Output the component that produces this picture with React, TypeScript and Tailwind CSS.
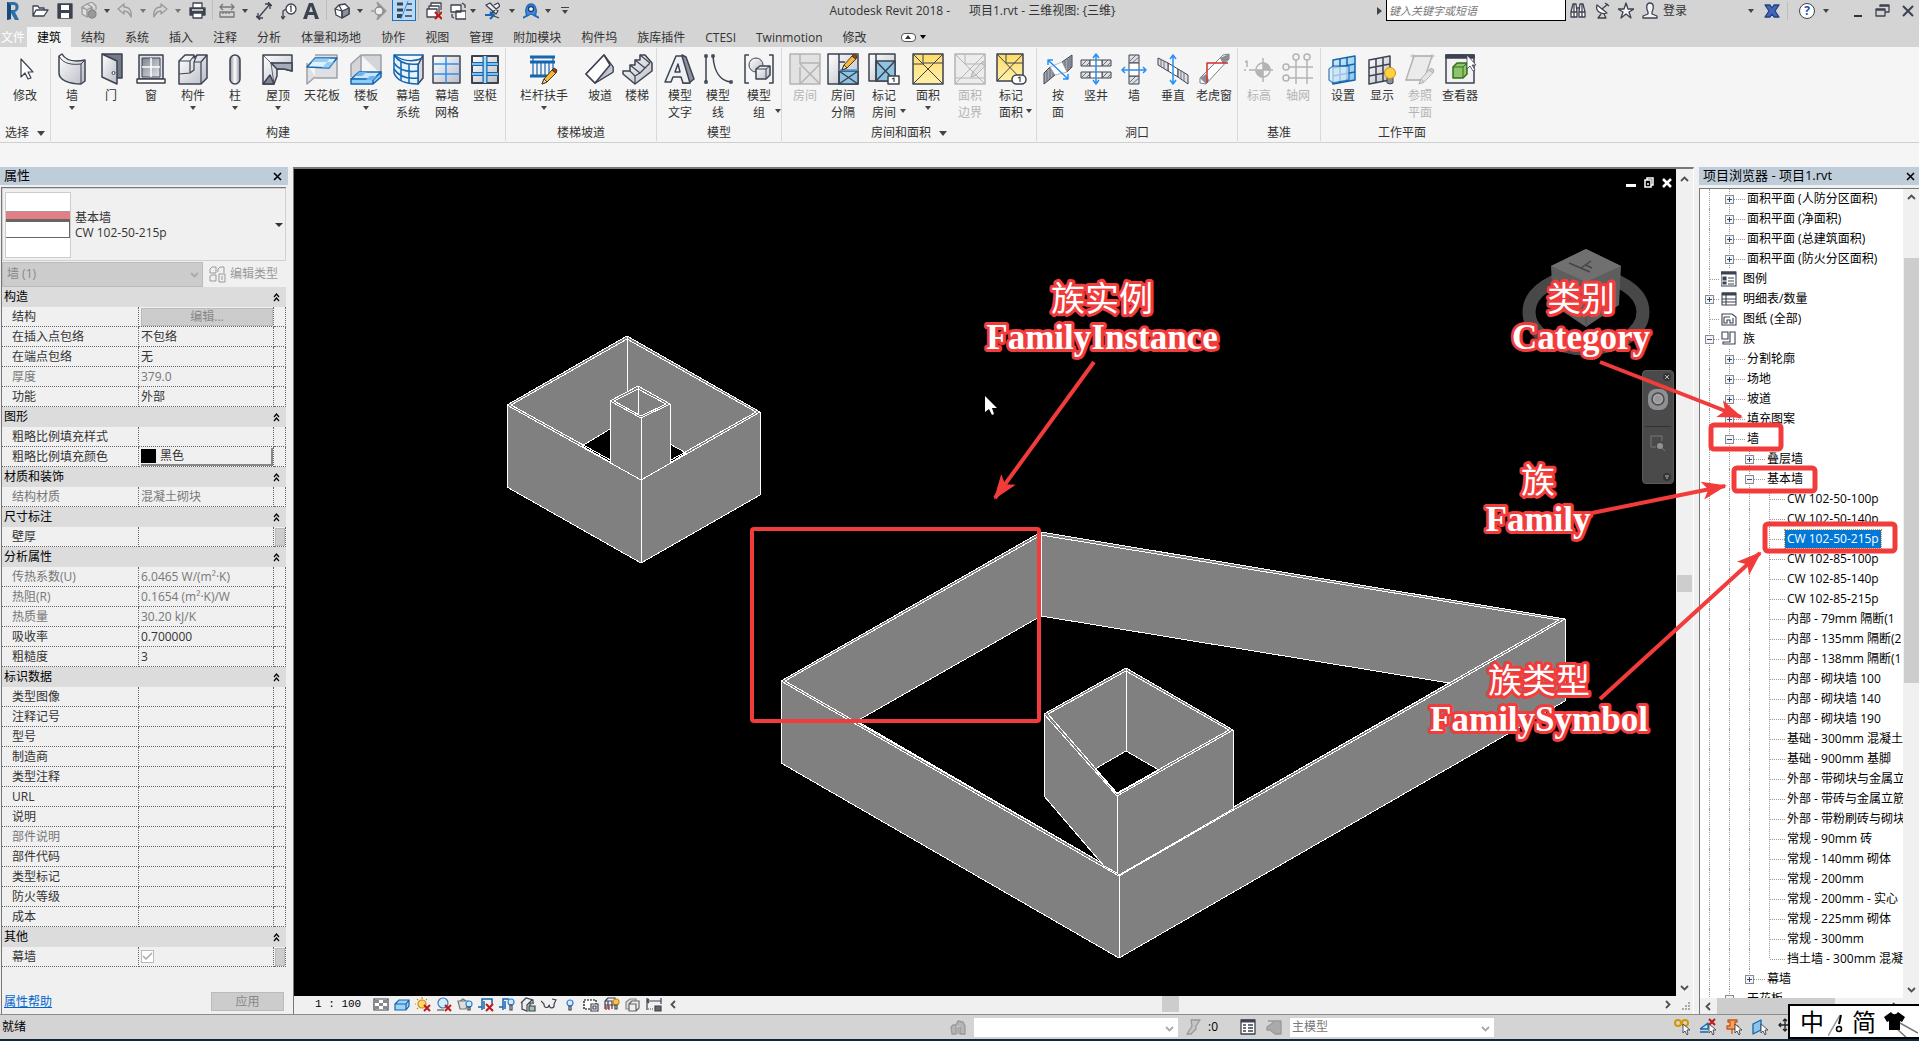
import React from "react";
import type { ReactNode } from "react";

const INK = "#3d4250";
const BLUE = "#1565b0";
const MUTE = "#b4b4b4";

function Svg({ s = 32, children, cls = "" }: { s?: number; children: ReactNode; cls?: string }) {
  return (
    <svg width={s} height={s} viewBox={`0 0 ${s} ${s}`} fill="none" stroke={INK} strokeWidth="1.5" strokeLinejoin="round" className={"shrink-0 " + cls} aria-hidden="true">
      {children}
    </svg>
  );
}

function Gradients() {
  return (
    <svg width="0" height="0" className="absolute" aria-hidden="true">
      <defs>
        <linearGradient id="metal" x1="0" y1="0" x2="1" y2="1">
          <stop offset="0" stopColor="#ffffff" />
          <stop offset="1" stopColor="#b9bcc6" />
        </linearGradient>
        <linearGradient id="metalDark" x1="0" y1="0" x2="1" y2="1">
          <stop offset="0" stopColor="#7c828f" />
          <stop offset="1" stopColor="#e3e5ea" />
        </linearGradient>
        <linearGradient id="tube" x1="0" y1="0" x2="1" y2="0">
          <stop offset="0" stopColor="#8d929d" />
          <stop offset="0.5" stopColor="#ffffff" />
          <stop offset="1" stopColor="#8d929d" />
        </linearGradient>
        <linearGradient id="yellow" x1="0" y1="0" x2="0" y2="1">
          <stop offset="0" stopColor="#ffdc66" />
          <stop offset="1" stopColor="#fff0ac" />
        </linearGradient>
        <linearGradient id="sky" x1="0" y1="0" x2="1" y2="1">
          <stop offset="0" stopColor="#d5edfa" />
          <stop offset="1" stopColor="#86c2e6" />
        </linearGradient>
      </defs>
    </svg>
  );
}

const Pencil = ({ x, y, grey }: { x: number; y: number; grey?: boolean }) => (
  <g transform={`translate(${x} ${y})`} stroke={grey ? MUTE : "#4b3a1d"} strokeWidth="1">
    <path d="M0 15 L2 10 L10 1 L14 4 L5 13Z" fill={grey ? "#e4e4e4" : "#f5b83a"} />
    <path d="M0 15 L2 10 L5 13Z" fill={grey ? "#ddd" : "#f7e5c4"} />
    <path d="M10 1 L12 -1 L15 1 L14 4Z" fill={grey ? "#ccc" : "#a03c28"} />
  </g>
);

const Hatch = ({ d, x }: { d: string; x: string }) => (
  <>
    <path d={d} fill="#dfe0e4" strokeWidth="1" />
    <path d={x} stroke="#6b707c" strokeWidth="1" />
  </>
);

const ICONS: Record<string, ReactNode> = {
  modify: <path d="M12 6 V24 L16 20 L19 26 L22 25 L19 19 H24Z" fill="#fff" strokeWidth="1.2" />,
  wall: (
    <>
      <path d="M3 3 L6 1 C10 8 19 9 29 7 V28 L25 31 C13 31 3 27 3 20Z" fill="url(#metal)" />
      <path d="M3 3 C7 11 16 12 25 11 V31 M25 11 L29 7" strokeWidth="1" />
    </>
  ),
  door: (
    <>
      <path d="M7 1 H27 V25 H22" fill="#747a87" />
      <path d="M7 1 L22 8 V31 L7 24Z" fill="url(#metal)" />
      <circle cx="18.500" cy="20" r="1.500" fill="#fff" strokeWidth="1" />
    </>
  ),
  window: (
    <>
      <path d="M4 2 H28 V26 H4Z" fill="#dfe1e6" />
      <path d="M7 5 H25 V24 H7Z" fill="url(#metalDark)" strokeWidth="1" />
      <path d="M16 5 V24 M7 14 H25" stroke="#fff" />
      <path d="M2 26 H30 V30 H2Z" fill="#fff" />
    </>
  ),
  component: (
    <>
      <path d="M2 8 L8 2 H17 V5 L20 2 H30 V25 L24 31 H2Z" fill="url(#metal)" />
      <path d="M2 8 H13 L17 3 M13 8 V20 L2 21 M13 20 L17 17 V9 L20 2 M17 9 H24 V31 M24 9 L30 2" strokeWidth="1.200" />
    </>
  ),
  column: <rect x="11" y="2" width="10" height="29" rx="5" fill="url(#tube)" />,
  roof: (
    <>
      <path d="M1 2 H30 V18 L22 16 H15 V23 L12 31 H1Z" fill="url(#metal)" />
      <path d="M1 2 L9 10 L12 31 M9 10 L30 10" strokeWidth="0.800" />
      <path d="M9 10 H30 V18 L22 16 H15Z" fill="#a6abb8" />
      <path d="M1 31 L8 22 L12 31Z" fill="#7f8694" />
    </>
  ),
  ceiling: (
    <>
      <path d="M9 2 H31 V25 H9 M1 10 V31 L9 24" fill="#dfe0e3" stroke="#9da0a8" />
      <path d="M1 14 L9 5 H31 L23 15Z" fill="#dff0fb" stroke={BLUE} />
      <path d="M9 5 H17 L13 9 H5Z M21 9 H29 L23 15 H16Z M17 5 H24 L21 9 H13Z" fill="#7cbdf0" stroke="none" opacity="0.700" />
    </>
  ),
  floor: (
    <>
      <path d="M11 2 H31 V21 M1 24 V11 L11 2 V21" fill="#d4d5d9" stroke="#9da0a8" />
      <path d="M1 26 L9 19 H31 L23 27Z" fill="#c9e6fa" stroke={BLUE} />
      <path d="M1 26 H23 V31 H1Z M23 27 L31 19 V24 L23 31Z" fill="#8fcdf5" stroke={BLUE} />
      <path d="M9 19 H17 L12 23 H5Z M20 23 H27 L23 27 H16Z" fill="#6fb4ea" stroke="none" />
    </>
  ),
  curtainSystem: (
    <>
      <path d="M26 12 L31 2 V25 L26 31Z" fill="#d8dae0" />
      <path d="M2 2 C8 11 18 12 26 11 V31 C15 31 5 28 2 20Z M2 2 H31" fill="#e3f2fc" stroke={BLUE} />
      <path d="M2 10 C8 19 18 19 26 18 M2 16 C8 25 18 26 26 25 M9 8 V28 M17 11 V30 M2 2 C12 9 22 9 31 5" stroke={BLUE} />
    </>
  ),
  curtainGrid: (
    <>
      <rect x="2" y="3" width="27" height="27" fill="url(#metal)" />
      <path d="M15 3 V30 M2 11 H29 M2 21 H29" stroke="#2f8ff0" />
    </>
  ),
  mullion: (
    <>
      <rect x="3" y="3" width="26" height="27" fill="url(#metal)" strokeWidth="2" />
      <path d="M3 11 H29 M3 21 H29" stroke={BLUE} strokeWidth="4" />
      <path d="M3 11 H29 M3 21 H29" stroke="#a8daf5" strokeWidth="1.500" />
      <path d="M16 3 V30" stroke={BLUE} strokeWidth="5" />
      <path d="M16 3 V30" stroke="#a8daf5" strokeWidth="2.500" />
    </>
  ),
  railing: (
    <>
      <path d="M2 4 H27 M2 9 H27 M2 23 H24" stroke={BLUE} strokeWidth="3" />
      <path d="M5 5 V24 M9 9 V24 M13 9 V24 M17 9 V24 M21 9 V24 M25 5 V22" stroke={BLUE} strokeWidth="1.200" />
      <Pencil x={14} y={16} />
    </>
  ),
  ramp: (
    <>
      <path d="M2 21 L20 2 L29 14 V19 L11 30Z" fill="#fff" />
      <path d="M20 2 L29 14 V19 L11 30Z" fill="url(#metalDark)" strokeWidth="1" />
      <path d="M2 21 L20 2 L26 12 L11 30Z" fill="#fff" />
    </>
  ),
  stair: (
    <>
      <path d="M2 18 H9 V12 H14 V7 H19 V2 H24 L31 10 V18 L14 31 L2 21Z" fill="url(#metal)" />
      <path d="M9 18 L14 23 M9 12 L19 20 M14 7 L24 15 M19 2 L29 10 M14 31 V23 L19 20 L24 15 L29 10" strokeWidth="1.200" />
    </>
  ),
  modelText: (
    <>
      <path d="M18 2 L22 4 L30 26 L25 30 H19Z" fill="#8d93a1" />
      <path d="M1 29 L12 3 H18 L26 30 H19 L17 24 H9 L7 29Z" fill="#eef0f4" />
      <path d="M11 19 H16 L14 11Z" fill="#fff" />
    </>
  ),
  modelLine: (
    <>
      <path d="M4 3 V29 M11 3 C12 18 18 28 29 29" />
      <path d="M3 2 H5 V4 H3Z M3 28 H5 V30 H3Z M10 2 H12 V4 H10Z M28 28 H30 V30 H28Z" fill="#fff" />
    </>
  ),
  modelGroup: (
    <>
      <path d="M6 2 H2 V30 H6 M26 2 H30 V30 H26" />
      <circle cx="13" cy="12" r="7" fill="url(#metal)" strokeWidth="1" />
      <path d="M13 16 L17 13 H27 V22 L23 26 H13Z" fill="url(#metal)" />
      <path d="M13 16 H23 V26 M23 16 L27 13" strokeWidth="1" />
    </>
  ),
  room: (
    <g stroke={MUTE}>
      <rect x="1" y="1" width="30" height="30" fill="#e2e2e2" />
      <path d="M11 1 V11 M11 14 V31 M11 10 H31 M11 11 L31 31 M31 11 L11 31" />
    </g>
  ),
  roomSeparator: (
    <>
      <rect x="1" y="1" width="30" height="30" fill="url(#metal)" />
      <path d="M12 18 H31 V31 H12Z" fill="#8cc4e2" />
      <path d="M12 1 V31 M12 18 L31 31 M31 18 L12 31 M12 9 H18" />
      <path d="M12 17 H31" stroke="#3a9ef2" />
      <Pencil x={15} y={2} />
    </>
  ),
  tagRoom: (
    <>
      <rect x="1" y="1" width="26" height="27" fill="url(#metal)" />
      <path d="M8 8 H27 V28 H8Z" fill="#8cc4e2" />
      <path d="M8 1 V28 M8 8 L27 28 M27 8 L8 28" />
      <rect x="20" y="23" width="11" height="8" fill="#fff" />
      <path d="M24 26 L26 25 V29" strokeWidth="1.200" />
    </>
  ),
  area: (
    <>
      <rect x="1" y="1" width="30" height="30" fill="url(#yellow)" />
      <path d="M1 1 L31 31 M31 1 L1 31 M11 1 V11 H1" strokeWidth="1" />
      <path d="M11 10 H31" strokeWidth="1" />
    </>
  ),
  areaBoundary: (
    <g stroke={MUTE}>
      <rect x="1" y="1" width="30" height="30" fill="#ececec" />
      <path d="M1 1 L31 31 M31 1 L1 31 M11 1 V11 H31 M1 25 H31" strokeWidth="1" />
      <Pencil x={17} y={9} grey />
    </g>
  ),
  tagArea: (
    <>
      <rect x="2" y="1" width="26" height="27" fill="url(#yellow)" />
      <path d="M2 1 L28 28 M28 1 L2 28 M11 1 V10 H28" strokeWidth="1" />
      <rect x="17" y="22" width="14" height="9" rx="4.500" fill="#fff" />
      <path d="M23 25 L25 24 V29" strokeWidth="1.200" />
    </>
  ),
  byFace: (
    <>
      <path d="M20 9 L30 2 V14 L25 19Z M2 20 L8 14 L13 22 L2 31Z" fill="#a4a8b2" strokeWidth="1" />
      <path d="M23 8 V16 M26 6 V18 M28 4 V15 M5 18 V28 M8 15 V26 M11 19 V23" stroke="#5f6470" strokeWidth="1" />
      <path d="M8 14 L20 9 L25 19 L13 22Z" fill="#fff" strokeWidth="0.800" stroke="#aaa" />
      <path d="M6 7 L26 26 M6 12 V7 H11 M21 26 H26 V21" stroke="#2590f5" />
    </>
  ),
  shaft: (
    <>
      <Hatch d="M1 7 H10 V13 H1Z M22 7 H31 V13 H22Z M1 19 H10 V25 H1Z M22 19 H31 V25 H22Z" x="M2 12 L7 7 M6 13 L10 9 M23 12 L28 7 M27 13 L31 9 M2 24 L7 19 M6 25 L10 21 M23 24 L28 19 M27 25 L31 21" />
      <path d="M10 7 H22 V13 H10Z M10 19 H22 V25 H10Z" fill="#fff" strokeWidth="1" />
      <path d="M16 2 V30 M13 5 L16 1 L19 5 M13 27 L16 31 L19 27" stroke="#2590f5" />
    </>
  ),
  wallOpening: (
    <>
      <Hatch d="M11 2 H21 V10 H11Z M11 23 H21 V31 H11Z" x="M12 8 L18 2 M14 10 L21 4 M12 29 L18 23 M14 31 L21 25" />
      <path d="M11 10 H21 V23 H11Z" fill="#fff" strokeWidth="1" />
      <path d="M4 17 H28 M7 14 L4 17 L7 20 M25 14 L28 17 L25 20" stroke="#2590f5" />
    </>
  ),
  vertical: (
    <>
      <path d="M11 10 L21 16 V24 L11 18Z" fill="#fff" strokeWidth="1" />
      <Hatch d="M1 5 L11 10 V18 L1 12Z M21 16 L31 22 V31 L21 24Z" x="M4 6 V14 M7 8 V16 M24 18 V26 M27 20 V28" />
      <path d="M16 3 V30 M13 6 L16 2 L19 6 M13 27 L16 31 L19 27" stroke="#2590f5" />
    </>
  ),
  dormer: (
    <>
      <path d="M2 25 L25 2 L31 1 V6 L8 31 L2 30Z" fill="#fff" stroke="#7b7f89" strokeWidth="1" />
      <path d="M22 5 L31 1 V6 L25 11Z M2 25 L8 21 L11 27 L8 31Z" fill="#888d98" stroke="none" />
      <path d="M9 30 V10 H30" stroke="#d0312d" />
    </>
  ),
  level: (
    <g stroke={MUTE}>
      <path d="M2 9 L4 8 V14 M1 17 H3 M6 17 H9 M9 17 H30 M20 5 V29" />
      <circle cx="20" cy="17" r="7" fill="#f5f5f5" />
      <path d="M20 17 V10 A7 7 0 0 1 27 17Z M20 17 V24 A7 7 0 0 1 13 17Z" fill={MUTE} />
    </g>
  ),
  grid: (
    <g stroke={MUTE}>
      <path d="M14 7 V31 M25 7 V31 M7 14 H31 M7 25 H31" />
      <circle cx="14" cy="4" r="3" /><circle cx="25" cy="4" r="3" /><circle cx="4" cy="14" r="3" /><circle cx="4" cy="25" r="3" />
    </g>
  ),
  setPlane: (
    <g stroke={BLUE}>
      <path d="M6 7 L28 3 V27 L6 31Z" fill="url(#sky)" />
      <path d="M6 15 L28 11 M6 23 L28 19 M13 6 V30 M20 5 V28" />
      <path d="M2 16 L6 13 H22 V27 L6 30 L2 27Z" fill="#d9ecf7" opacity="0.700" />
    </g>
  ),
  show: (
    <>
      <path d="M3 7 L24 3 V27 L3 31Z" fill="url(#metal)" />
      <path d="M3 15 L24 11 M3 23 L24 19 M10 6 V30 M17 5 V28" />
      <path d="M21 24 H27 V30 L24 31 L21 30Z" fill="#8b909c" strokeWidth="1" />
      <circle cx="24" cy="20" r="5.500" fill="#ffd23f" stroke="#d18d12" strokeWidth="1" />
    </>
  ),
  refPlane: (
    <g stroke={MUTE}>
      <path d="M10 3 H28 L20 27 H2Z" fill="#ebebeb" />
      <path d="M6 3 H31 M1 27 H22 M9 1 V6 M28 1 V6" strokeWidth="1" />
      <Pencil x={15} y={16} grey />
    </g>
  ),
  viewer: (
    <>
      <rect x="2" y="2" width="28" height="28" fill="#f2f2f2" />
      <path d="M2 2 H30 V5 H2Z" fill={INK} />
      <path d="M9 14 L13 10 H23 V21 L19 25 H9Z" fill="#8fc56a" stroke="#356d1d" />
      <path d="M9 14 H19 V25 M19 14 L23 10" stroke="#356d1d" strokeWidth="1" />
      <path d="M23 2 V16 L26 13 L29 18 L31 17 L28 12 H32Z" fill="#fff" strokeWidth="0.800" />
    </>
  ),
};

type Tool = { icon: string; text: string[]; w?: string; drop?: "below" | "side"; off?: boolean };

const PANELS: { title: string; drop?: boolean; pad: string; tools: Tool[] }[] = [
  { title: "选择", drop: true, pad: "px-1.5", tools: [{ icon: "modify", text: ["修改"] }] },
  {
    title: "构建",
    pad: "px-px",
    tools: [
      { icon: "wall", text: ["墙"], w: "w-10", drop: "below" },
      { icon: "door", text: ["门"] },
      { icon: "window", text: ["窗"], w: "w-[42px]" },
      { icon: "component", text: ["构件"], w: "w-[42px]", drop: "below" },
      { icon: "column", text: ["柱"], w: "w-[42px]", drop: "below" },
      { icon: "roof", text: ["屋顶"], w: "w-11", drop: "below" },
      { icon: "ceiling", text: ["天花板"], w: "w-11" },
      { icon: "floor", text: ["楼板"], w: "w-11", drop: "below" },
      { icon: "curtainSystem", text: ["幕墙", "系统"], w: "w-10" },
      { icon: "curtainGrid", text: ["幕墙", "网格"] },
      { icon: "mullion", text: ["竖梃"] },
    ],
  },
  {
    title: "楼梯坡道",
    pad: "px-px",
    tools: [
      { icon: "railing", text: ["栏杆扶手"], w: "w-[74px]", drop: "below" },
      { icon: "ramp", text: ["坡道"] },
      { icon: "stair", text: ["楼梯"], w: "w-9" },
    ],
  },
  {
    title: "模型",
    pad: "pl-1",
    tools: [
      { icon: "modelText", text: ["模型", "文字"] },
      { icon: "modelLine", text: ["模型", "线"] },
      { icon: "modelGroup", text: ["模型", "组"], w: "w-11", drop: "side" },
    ],
  },
  {
    title: "房间和面积",
    drop: true,
    pad: "px-1",
    tools: [
      { icon: "room", text: ["房间"], off: true },
      { icon: "roomSeparator", text: ["房间", "分隔"] },
      { icon: "tagRoom", text: ["标记", "房间"], w: "w-11", drop: "side" },
      { icon: "area", text: ["面积"], w: "w-11", drop: "below" },
      { icon: "areaBoundary", text: ["面积", "边界"], w: "w-10", off: true },
      { icon: "tagArea", text: ["标记", "面积"], w: "w-[42px]", drop: "side" },
    ],
  },
  {
    title: "洞口",
    pad: "px-0.5",
    tools: [
      { icon: "byFace", text: ["按", "面"] },
      { icon: "shaft", text: ["竖井"] },
      { icon: "wallOpening", text: ["墙"] },
      { icon: "vertical", text: ["垂直"], w: "w-10" },
      { icon: "dormer", text: ["老虎窗"], w: "w-[42px]" },
    ],
  },
  {
    title: "基准",
    pad: "px-0.5",
    tools: [
      { icon: "level", text: ["标高"], off: true },
      { icon: "grid", text: ["轴网"], w: "w-10", off: true },
    ],
  },
  {
    title: "工作平面",
    pad: "px-0.5",
    tools: [
      { icon: "setPlane", text: ["设置"], w: "w-10" },
      { icon: "show", text: ["显示"] },
      { icon: "refPlane", text: ["参照", "平面"], off: true },
      { icon: "viewer", text: ["查看器"], w: "w-[42px]" },
    ],
  },
];

const Caret = ({ cls = "border-t-[#444]" }: { cls?: string }) => (
  <span className={"block h-0 w-0 border-x-[3px] border-t-[4px] border-x-transparent " + cls} />
);

function RibbonTool({ tool }: { tool: Tool }) {
  return (
    <button
      disabled={tool.off}
      className={"relative flex shrink-0 flex-col items-center pt-[5px] leading-[17px] " + (tool.w ?? "w-[38px]") + (tool.off ? " text-[#b4b4b4]" : "")}
    >
      <Svg>{ICONS[tool.icon]}</Svg>
      <span className="mt-0.5 flex flex-col items-center whitespace-nowrap">
        {tool.text.map((line) => (
          <span key={line}>{line}</span>
        ))}
        {tool.drop === "below" && <span className="mt-0.5"><Caret /></span>}
      </span>
      {tool.drop === "side" && <span className="absolute right-0 bottom-3"><Caret /></span>}
    </button>
  );
}

const g16 = (children: ReactNode, w = 16) => (
  <svg width={w} height="18" viewBox={`0 0 ${w} 18`} fill="none" stroke={INK} strokeWidth="1.300" strokeLinejoin="round" aria-hidden="true">
    {children}
  </svg>
);

const QAT: { n: string; w: string; el: ReactNode; on?: boolean }[] = [
  {
    n: "Revit", w: "w-[26px]",
    el: g16(
      <>
        <path d="M2 0 H9 C15 0 15 9 10 10 L14 18 H10 L6 11 V17 L2 18Z M6 3 V8 H9 C11 8 11 3 9 3Z" fill="#2f6fa8" fillRule="evenodd" stroke="none" />
        <path d="M2 0 L6 3 V17 L2 18Z" fill="#194a7b" stroke="none" />
      </>
    ),
  },
  { n: "打开", w: "w-7", el: g16(<path d="M1 14 V4 H6 L7 6 H12 V8 M1 14 L4 8 H16 L12 14Z" fill="#fff" />, 17) },
  { n: "保存", w: "w-[22px]", el: g16(<><path d="M1 2 H15 V16 H1Z" fill={INK} /><path d="M4 3 H12 V8 H4Z M4 11 H12 V16 H4Z" fill="#fff" stroke="none" /></>) },
  { n: "同步", w: "w-[26px]", el: g16(<><path d="M1 5 L6 2 L11 5 V12 L6 15 L1 12Z M1 5 L6 8 L11 5 M6 8 V15 M6 2 L11 0 L15 4 V8" stroke="#999" fill="#ddd" /><circle cx="11" cy="12" r="4" fill="#999" stroke="#888" /></>) },
  { n: "v1", w: "w-2.5", el: <Caret /> },
  { n: "放弃", w: "w-[26px]", el: g16(<path d="M1 7 L7 2 V5 C12 5 15 8 14 15 C12 10 10 9 7 9 V12Z" stroke="#999" />) },
  { n: "v2", w: "w-2.5", el: <Caret cls="border-t-[#777]" /> },
  { n: "重做", w: "w-6", el: g16(<path d="M15 7 L9 2 V5 C4 5 1 8 2 15 C4 10 6 9 9 9 V12Z" stroke="#999" />) },
  { n: "v3", w: "w-3", el: <Caret cls="border-t-[#777]" /> },
  { n: "打印", w: "w-[26px]", el: g16(<><path d="M4 6 V1 H13 V6" fill="#fff" /><path d="M1 6 H16 V13 H1Z" fill={INK} /><path d="M4 11 H13 V16 H4Z" fill="#fff" /><path d="M3 8 H14" stroke="#fff" /></>, 17) },
  { n: "|1", w: "w-1", el: <i className="h-5 w-px bg-[#bdbdbd]" /> },
  { n: "测量", w: "w-[26px]", el: g16(<path d="M1 5 H15 M4 2 L1 5 L4 8 M12 2 L15 5 L12 8 M1 10 H15 V15 H1Z M4 10 V12 M7 10 V12 M10 10 V12" stroke="#777" />) },
  { n: "v4", w: "w-2.5", el: <Caret /> },
  { n: "对齐尺寸标注", w: "w-7", el: g16(<path d="M2 16 L14 2 M2 11 V16 H7 M9 2 H14 V7 M0 14 L4 18 M12 0 L16 4" />) },
  { n: "标记", w: "w-[22px]", el: g16(<><path d="M5 7 L2 9 V16 M0 14 L2 17 L4 14" /><circle cx="10" cy="7" r="5" fill="#fff" /><path d="M9 5 L10 4 V10" /></>) },
  { n: "文字", w: "w-[22px]", el: g16(<path d="M0 17 L6 1 H10 L16 17 H12 L11 13 H5 L4 17Z M6 10 H10 L8 4Z" fill={INK} fillRule="evenodd" stroke="none" />) },
  { n: "|2", w: "w-2", el: <i className="h-5 w-px bg-[#bdbdbd]" /> },
  { n: "三维视图", w: "w-6", el: g16(<><path d="M1 7 L5 3 L11 2 L15 6 V12 L8 16 L2 13Z" fill="#fff" /><path d="M8 9 L15 6 V12 L8 16Z" fill="#8a8f9b" /><path d="M1 7 L8 9 V16 M5 3 L8 9" /></>) },
  { n: "v5", w: "w-3", el: <Caret /> },
  { n: "剖面", w: "w-[26px]", el: g16(<><path d="M6 0 L15 9 L6 18 L9 9Z M3 9 H0" stroke="#999" fill="#999" /><circle cx="8" cy="9" r="4" stroke="#888" fill="#eee" /></>) },
  { n: "细线", w: "w-6", on: true, el: g16(<><path d="M1 3 H7 M1 9 H7" strokeWidth="3" /><path d="M1 15 H6" strokeWidth="4" /><path d="M11 3 H16 M10 9 H16 M9 15 H16" strokeWidth="1.500" /><path d="M12 0 L5 18" stroke="#2f8ff0" strokeWidth="1" /></>) },
  { n: "|3", w: "w-1", el: <i className="h-5 w-px bg-[#bdbdbd]" /> },
  { n: "关闭隐藏窗口", w: "w-7", el: g16(<><path d="M5 4 V1 H15 V8 M3 7 V4 H13 V11 M1 7 H11 V15 H1Z" fill="#fff" /><path d="M9 10 L16 17 M16 10 L9 17" stroke="#c01818" strokeWidth="2.200" /></>) },
  { n: "切换窗口", w: "w-5", el: g16(<><path d="M1 3 H11 V10 H1Z M6 9 H16 V17 H6Z" fill="#fff" /><path d="M12 1 L15 3 V6 M2 12 V15 L4 16" /></>) },
  { n: "v6", w: "w-2.5", el: <Caret /> },
  { n: "用户界面", w: "w-7", el: g16(<><path d="M2 3 L6 1 L14 9 L12 12 L4 5Z M10 3 L14 1 L16 4 L6 12" fill="#eee" /><path d="M1 13 H9 M6 10 L10 13 L6 17" stroke="#1766b5" strokeWidth="2" /><path d="M10 14 L15 16" /></>) },
  { n: "v7", w: "w-3", el: <Caret /> },
  { n: "插件", w: "w-[26px]", el: g16(<><path d="M4 14 C1 8 4 2 8 2 C12 2 15 8 12 14 L8 12Z" fill="#3c8be0" stroke="#2469b2" /><circle cx="8" cy="7" r="2.500" fill="#fff" stroke="#123e75" /><path d="M0 16 L5 13 M11 13 L16 16" stroke="#2469b2" strokeWidth="2" /></>) },
  { n: "v8", w: "w-2", el: <Caret /> },
  { n: "自定义", w: "w-[26px]", el: <span className="flex flex-col items-center gap-0.5"><i className="h-px w-2 bg-[#444]" /><Caret /></span> },
];

function TitleBar() {
  return (
    <header className="flex h-[27px] shrink-0 items-start bg-[#d4d4d4]">
      <div className="flex shrink-0">
        {QAT.map((q) =>
          q.n[0] === "|" ? (
            <span key={q.n} className={"flex h-5 items-center justify-center " + q.w}>{q.el}</span>
          ) : (
            <button
              key={q.n}
              aria-label={q.n[0] === "v" ? "下拉" : q.n}
              className={"flex h-[21px] shrink-0 items-center justify-center " + q.w + (q.on ? " border border-t-0 border-[#1f6fc0] bg-[#b9daf5]" : "")}
            >
              {q.el}
            </button>
          )
        )}
      </div>
      <h1 className="flex-1 pr-1.5 text-center leading-[22px] whitespace-pre text-[#333]">{"Autodesk Revit 2018 -      项目1.rvt - 三维视图: {三维}"}</h1>
      <div className="flex h-[21px] shrink-0 items-center">
        <span className="flex w-[13px] justify-center"><i className="h-0 w-0 border-y-[4px] border-l-[5px] border-y-transparent border-l-[#444]" /></span>
        <input aria-label="搜索" placeholder="键入关键字或短语" className="h-[21px] w-[180px] border border-t-0 border-black bg-white px-0.5 text-[11px] italic outline-none placeholder:text-[#777]" />
        <button aria-label="搜索" className="flex w-6 justify-center">{g16(<><path d="M1 10 L3 2 H6 L7 10 V15 H1Z M9 10 L10 2 H13 L15 10 V15 H9Z" fill="#fff" /><path d="M1 10 H7 M9 10 H15 M7 6 H9 M4 2 V15 M12 2 V15" /></>)}</button>
        <button aria-label="通讯中心" className="flex w-6 justify-center">{g16(<><path d="M3 3 C1 9 7 13 13 11Z" fill="#fff" /><path d="M8 7 L14 2 M7 12 L4 16 H12 L10 12 M11 1 L15 4" /></>)}</button>
        <button aria-label="收藏夹" className="flex w-6 justify-center">{g16(<path d="M8 1 L10 7 H16 L11 10 L13 16 L8 12 L3 16 L5 10 L0 7 H6Z" fill="#f4f4f4" />)}</button>
        <button aria-label="用户" className="flex w-6 justify-center">{g16(<path d="M8 1 C4 1 4 6 6 10 V12 L1 14 V16 H15 V14 L10 12 V10 C12 6 12 1 8 1Z" fill="#f4f4f4" />)}</button>
        <button className="w-[83px] pl-px text-left">登录</button>
        <button aria-label="下拉" className="flex w-3 justify-center"><Caret /></button>
        <button aria-label="Exchange" className="flex w-[30px] justify-center">{g16(<path d="M1 3 H6 L8 6 L10 3 H15 L11 9 L15 15 H10 L8 12 L6 15 H1 L5 9Z" fill="#4468b8" stroke="#23407c" />)}</button>
        <i className="mr-1 h-[18px] w-px bg-[#bdbdbd]" />
        <button aria-label="帮助" className="flex w-[30px] justify-center"><span className="flex h-4 w-4 items-center justify-center rounded-full border-[1.5px] border-[#3d4250] bg-white text-[12px] font-bold text-[#1c50b0]">?</span></button>
        <button aria-label="下拉" className="flex w-6 pl-px"><Caret /></button>
        <button aria-label="最小化" className="flex w-6 justify-center"><i className="mt-2.5 h-0.5 w-2 bg-[#333]" /></button>
        <button aria-label="还原" className="flex w-[26px] justify-center">{g16(<path d="M5 5 V3 H14 V10 H10 M1 7 H10 V14 H1Z M1 8 H10 M5 4 H14" />)}</button>
        <button aria-label="关闭" className="flex w-[23px] justify-center">{g16(<path d="M3 4 L13 14 M13 4 L3 14" strokeWidth="2" />)}</button>
      </div>
    </header>
  );
}

const TABS = ["结构", "系统", "插入", "注释", "分析", "体量和场地", "协作", "视图", "管理", "附加模块", "构件坞", "族库插件", "CTESI", "Twinmotion", "修改"];

function Ribbon() {
  return (
    <>
      <nav className="flex h-5 shrink-0 items-stretch bg-[#d4d4d4] leading-[22px]">
        <button className="px-px pr-0.5 text-white">文件</button>
        <button className="bg-[#f5f5f5] px-2.5 text-black">建筑</button>
        {TABS.map((t) => (
          <button key={t} className="px-2.5">{t}</button>
        ))}
        <button aria-label="功能区显示" className="ml-6 flex items-center gap-1">
          <span className="flex h-[9px] w-[15px] items-center justify-center rounded-sm border border-[#555] bg-white"><i className="h-0 w-0 border-x-[3px] border-b-[4px] border-x-transparent border-b-[#333]" /></span>
          <Caret cls="border-t-black" />
        </button>
      </nav>
      <section className="flex h-24 shrink-0 border-b border-[#d0d0d0] bg-[#f5f5f5]">
        {PANELS.map((p) => (
          <div key={p.title} className="my-px flex flex-col border-r border-[#d9d9d9] last:border-r-0">
            <div className={"flex flex-1 items-stretch " + p.pad}>
              {p.tools.map((t) => (
                <RibbonTool key={t.text.join("")} tool={t} />
              ))}
            </div>
            <div className="flex h-4 items-center justify-center gap-2 leading-4">
              {p.title}
              {p.drop && <span className="block h-0 w-0 border-x-[4px] border-t-[5px] border-x-transparent border-t-[#444]" />}
            </div>
          </div>
        ))}
      </section>
      <div className="h-6 shrink-0 bg-[#f5f5f5]" />
    </>
  );
}

type Prop = [label: string, value?: string, mode?: "off" | "edit" | "color" | "more" | "check"];
const GROUPS: { title: string; rows: Prop[] }[] = [
  { title: "构造", rows: [["结构", "编辑...", "edit"], ["在插入点包络", "不包络"], ["在端点包络", "无"], ["厚度", "379.0", "off"], ["功能", "外部"]] },
  { title: "图形", rows: [["粗略比例填充样式"], ["粗略比例填充颜色", "黑色", "color"]] },
  { title: "材质和装饰", rows: [["结构材质", "混凝土砌块", "off"]] },
  { title: "尺寸标注", rows: [["壁厚", "", "more"]] },
  { title: "分析属性", rows: [["传热系数(U)", "6.0465 W/(m²·K)", "off"], ["热阻(R)", "0.1654 (m²·K)/W", "off"], ["热质量", "30.20 kJ/K", "off"], ["吸收率", "0.700000"], ["粗糙度", "3"]] },
  { title: "标识数据", rows: [["类型图像"], ["注释记号"], ["型号"], ["制造商"], ["类型注释"], ["URL"], ["说明"], ["部件说明", "", "off"], ["部件代码"], ["类型标记"], ["防火等级"], ["成本"]] },
  { title: "其他", rows: [["幕墙", "", "check"]] },
];

const CloseX = ({ c = "#000" }: { c?: string }) => (
  <svg width="9" height="9" viewBox="0 0 9 9" stroke={c} strokeWidth="1.600" aria-hidden="true"><path d="M1 1 L8 8 M8 1 L1 8" /></svg>
);

const Chevron = ({ r = 0, c = "#505050" }: { r?: number; c?: string }) => (
  <svg width="9" height="9" viewBox="0 0 9 9" fill="none" stroke={c} strokeWidth="1.800" aria-hidden="true"><path d="M1 6 L4.500 2.500 L8 6" transform={`rotate(${r} 4.500 4.500)`} /></svg>
);

function PropertyRow({ row: [label, value, mode] }: { row: Prop }) {
  const tone = mode === "off" ? " text-[#777]" : " text-[#333]";
  return (
    <tr className="h-5">
      <th scope="row" className={"border-r border-b border-dotted border-[#666] p-0 pl-[10px] text-left font-normal" + tone}>{label}</th>
      <td className={"border-r border-b border-dotted border-[#666] p-0 pl-0.5 whitespace-nowrap" + tone}>
        {mode === "edit" ? (
          <button disabled className="block h-[18px] w-full border border-[#bbb] bg-[#ccc] leading-4 text-[#888]">{value}</button>
        ) : mode === "color" ? (
          <button className="flex h-[18px] w-full items-center gap-1 border-r-2 border-b-2 border-[#888] leading-4"><i className="h-3.5 w-[15px] bg-black" />{value}</button>
        ) : mode === "check" ? (
          <label className="flex items-center">
            <input type="checkbox" checked readOnly aria-label={label} className="h-[13px] w-[13px] appearance-none border border-[#bbb] bg-white" />
            <svg width="11" height="11" viewBox="0 0 11 11" className="-ml-3 block" fill="none" stroke="#aaa" strokeWidth="1.500" aria-hidden="true"><path d="M1 5 L4 8 L10 2" /></svg>
          </label>
        ) : (
          value
        )}
      </td>
      <td className="border-r border-b border-dotted border-[#666] p-0 pl-px">
        {(mode === "more" || mode === "check") && <button aria-label={label + "关联"} className="block h-[18px] w-full border border-[#bbb] bg-[#ccc]" />}
      </td>
    </tr>
  );
}

function Properties() {
  return (
    <aside className="flex w-[288px] shrink-0 flex-col bg-[#f0f0f0]">
      <div className="flex h-[18px] items-center justify-between bg-[#bfcddb] pr-1.5 pl-1 text-[13px] text-black">
        属性
        <button aria-label="关闭属性"><CloseX /></button>
      </div>
      <div className="mt-0.5 mr-0.5 ml-px flex flex-1 flex-col border-t border-l border-[#777]">
        <div className="flex h-[73px] items-center border border-[#d0d0d0] pl-0.5">
          <span className="flex h-[66px] w-[66px] flex-col border border-[#ccc] bg-white pt-[18px]">
            <i className="h-2 border-t border-[#a99] bg-[#e27f86]" />
            <i className="h-[3px] bg-[#666]" />
            <i className="h-4 border-r border-b border-[#666]" />
          </span>
          <span className="ml-1 flex-1 leading-[15px] text-[#333]">基本墙<br />CW 102-50-215p</span>
          <button aria-label="类型选择" className="mr-0.5 border-x-[4px] border-t-[4px] border-x-transparent border-t-[#333]" />
        </div>
        <div className="flex h-[26px] items-center">
          <span className="relative flex w-[201px]">
            <select disabled aria-label="图元" className="h-[25px] w-full appearance-none border border-[#bbb] bg-[#ccc] pl-1 text-[#888]"><option>墙 (1)</option></select>
            <span className="absolute top-2 right-1"><Chevron r={180} c="#aaa" /></span>
          </span>
          <button disabled className="ml-1.5 flex items-center gap-1 text-[#999]">
            <svg width="17" height="17" viewBox="0 0 17 17" fill="none" stroke="#999" aria-hidden="true"><path d="M1 3 L3 1 H7 V7 H1Z M9 3 L11 1 H15 V7 M9 3 V6 M1 10 L3 9 H7 V15 H1Z M10 8 H16 V16 H10Z M12 11 H14 M12 13 H14" /></svg>
            编辑类型
          </button>
        </div>
        <table className="w-full table-fixed border-separate border-spacing-0 leading-[18px]">
          <colgroup><col className="w-[137px]" /><col className="w-[135px]" /><col className="w-3" /></colgroup>
          {GROUPS.map((g) => (
            <tbody key={g.title}>
              <tr className="h-5 bg-[#dcdcdc] text-black">
                <th colSpan={3} className="p-0 pr-1.5 pl-0.5 font-normal">
                  <span className="flex items-center justify-between">
                    {g.title}
                    <svg width="7" height="9" viewBox="0 0 7 9" fill="none" stroke="#000" strokeWidth="1.200" aria-hidden="true"><path d="M1 4 L3.500 1 L6 4 M1 8 L3.500 5 L6 8" /></svg>
                  </span>
                </th>
              </tr>
              {g.rows.map((r) => (
                <PropertyRow key={r[0]} row={r} />
              ))}
            </tbody>
          ))}
        </table>
        <div className="mt-auto flex items-center justify-between pr-0.5 pb-[3px] pl-0.5">
          <a href="#help" className="text-[#0066cc] underline">属性帮助</a>
          <button disabled className="h-[19px] w-[73px] border border-[#bbb] bg-[#ccc] leading-4 text-[#888]">应用</button>
        </div>
      </div>
    </aside>
  );
}

function Model() {
  return (
    <svg className="block h-full w-full" aria-label="三维视图">
      <g transform="translate(-294 -169)" fill="#808080" stroke="#fff" strokeWidth="1" shapeRendering="crispEdges">
        <path d="M507 405 L627 336 L760 412 V495 L641 563 L507 487Z" />
        <path d="M627 336 V392" />
        <path d="M582 446 L610 429 V462Z M670 444 L686 453 L670 463Z" fill="#000" />
        <path d="M511 405 L627 339 L756 412 L641 477Z" fill="none" />
        <path d="M610 401 L638 386 L670 404 V463 L641 480 L610 462Z" stroke="none" />
        <path d="M610 462 V401 L638 386 L670 404 V463 M610 401 L641 418 L670 404 M641 418 V480" fill="none" />
        <path d="M614 401 L638 389 L666 404 L641 416Z M638 386 V415" fill="none" />
        <path d="M507 405 L641 480 L760 412 M641 480 V563" fill="none" />
      </g>
      <g transform="translate(-295 -169)" fill="#808080" stroke="#fff" strokeWidth="1" shapeRendering="crispEdges">
        <path d="M782 681 L1042 532 L1566 619 V701 L1120 958 L782 763Z" />
        <path d="M858 721 L1042 616 L1450 683 L1120 873Z" fill="#000" />
        <path d="M786 681 L1042 535 L1560 620 L1120 873Z" fill="none" />
        <path d="M1042 532 V616" fill="none" />
        <path d="M1045 714 L1127 668 L1234 730 V809 L1120 875 L1118 873 L1105 866 L1045 796Z" />
        <path d="M1127 751 L1096 769 L1118 794 L1160 770Z" fill="#000" />
        <path d="M1045 714 L1118 796 L1234 730 M1118 796 V874 M1127 668 V751" fill="none" />
        <path d="M1049 714 L1127 671 L1230 730 L1118 793Z" fill="none" />
        <path d="M782 681 L1120 876 L1566 619 M1120 876 V958" fill="none" />
      </g>
      <path transform="translate(-294 -169)" d="M985 396 V412 L989 409 L992 415 L994 414 L992 408 H997Z" fill="#fff" />
    </svg>
  );
}

function ViewCube() {
  return (
    <svg width="132" height="112" viewBox="1520 246 132 112" aria-label="ViewCube">
      <ellipse cx="1586" cy="312" rx="57" ry="37" fill="none" stroke="#484848" strokeWidth="13" />
      <path d="M1586 249 L1621 266 L1619 305 L1586 327 L1553 305 L1551 266Z" fill="#5e5e5e" />
      <path d="M1586 249 L1621 266 L1586 282 L1551 266Z" fill="#707070" />
      <path d="M1586 282 V327" stroke="#4a4a4a" />
      <path d="M1569 263 L1590 272 M1591 261 L1581 268 M1586 265 L1592 268" stroke="#444" strokeWidth="1.500" />
    </svg>
  );
}

const VIEW_ICONS: ReactNode[] = [
  <><path d="M1 3 H15 V14 H1Z" fill="#fff" /><path d="M2 4 H6 V7 H2Z M10 4 H14 V7 H10Z M6 7 H10 V10 H6Z M2 10 H6 V13 H2Z M10 10 H14 V13 H10Z" fill="#888" stroke="none" /></>,
  <path d="M1 8 L5 4 H15 V10 L12 14 H1Z M1 8 H12 V14 M12 8 L15 4" fill="#9fd4f3" stroke={BLUE} />,
  <><circle cx="7" cy="8" r="4" fill="#ffd76a" stroke="#c78b17" /><path d="M7 1 V3 M1 8 H0 M2 3 L3 4 M12 3 L11 4 M2 13 L3 12" stroke="#c78b17" /><path d="M9 9 L15 15 M15 9 L9 15" stroke="#c01818" strokeWidth="2" /></>,
  <><circle cx="7" cy="7" r="5" fill="#d5ecfa" stroke="#3679b5" /><path d="M1 14 H8" strokeWidth="2" stroke="#999" /><path d="M9 9 L15 15 M15 9 L9 15" stroke="#c01818" strokeWidth="2" /></>,
  <><path d="M1 5 L3 13 H9 L11 5Z M3 5 L6 3 L9 5" fill="#ddd" stroke="#777" /><circle cx="12" cy="8" r="3" fill="#cfeaff" stroke="#2c83d6" /><path d="M11 11 H13 V14 H11Z" /></>,
  <><path d="M0 11 H4 V14 M4 12 V3 H14 V8 M6 5 V13" stroke={BLUE} strokeWidth="1.500" /><path d="M8 8 L15 15 M15 8 L8 15" stroke="#c01818" strokeWidth="2" /></>,
  <><path d="M0 11 H4 V14 M4 12 V3 H10 M6 5 V13" stroke={BLUE} strokeWidth="1.500" /><circle cx="12" cy="6" r="3" fill="#cfeaff" stroke="#2c83d6" /><path d="M11 9 H13 V14 H11Z" /></>,
  <><path d="M1 7 L6 2 L13 4 V8 M2 6 V13 L7 15 V9 L12 4" fill="#eee" /><path d="M9 10 H15 V15 H9Z M10 10 V7 H14" fill="#9cc5a8" /></>,
  <path d="M0 5 L3 8 C3 13 8 12 8 9 C9 14 14 12 13 8 L15 4 L11 3 M8 9 H9" />,
  <><circle cx="8" cy="7" r="3" fill="#cfeaff" stroke="#2c83d6" /><path d="M7 10 H9 V14 H7Z" /></>,
  <><path d="M1 4 H13 V13 H1Z" strokeDasharray="2 1" stroke="#000" fill="#fff" /><path d="M8 8 H15 V15 H8Z M10 10 H13 V13 H10Z" fill="#fff" /></>,
  <><path d="M1 5 L4 2 H11 V9 M1 5 H8 V13 M1 5 V13 M4 5 V13 M1 9 H11" /><path d="M2 14 V10 M5 14 V10" stroke="#c01818" /><circle cx="12" cy="6" r="3" fill="#ffc04a" stroke="#c78b17" /><path d="M11 9 H13 V13 H11Z" /></>,
  <><path d="M1 6 L5 3 H11 V10 L8 13 H1Z" fill="#ddd" stroke="#888" /><path d="M4 8 H11 V15 H4Z M4 8 L7 5 H14 V12 L11 15" stroke="#666" fill="#eee" /></>,
  <><path d="M1 2 V14 M15 2 V8 M1 5 H15 M3 3 L1 5 L3 7" /><path d="M9 10 H15 V15 H9Z" fill="#666" /><path d="M2 13 H8" strokeDasharray="1 1" /></>,
];

function Viewport() {
  return (
    <section className="ml-[5px] flex min-w-0 flex-1 flex-col border-t-2 border-r border-l border-t-[#777] border-r-white border-l-[#777] bg-[#f0f0f0]">
      <div className="flex min-h-0 flex-1">
        <div className="relative min-w-0 flex-1 overflow-hidden bg-black">
          <Model />
          <div className="absolute top-2 right-1 flex items-center gap-2">
            <button aria-label="最小化视图"><i className="mt-1.5 block h-[3px] w-2.5 bg-white" /></button>
            <button aria-label="还原视图"><svg width="10" height="11" viewBox="0 0 10 11" fill="none" stroke="#fff" strokeWidth="1.500" aria-hidden="true"><path d="M3 3 V1 H9 V8 H7 M1 3 H7 V10 H1Z M4 6 V8" /></svg></button>
            <button aria-label="关闭视图"><svg width="10" height="10" viewBox="0 0 10 10" stroke="#fff" strokeWidth="2.500" aria-hidden="true"><path d="M1 1 L9 9 M9 1 L1 9" /></svg></button>
          </div>
          <div className="absolute top-[77px] right-6"><ViewCube /></div>
          <div className="absolute top-[201px] right-0.5 flex h-[114px] w-8 flex-col items-center rounded border border-[#5a5a5a] bg-[#4a4a4a]">
            <button aria-label="关闭导航栏" className="mt-0.5 mr-0.5 self-end"><svg width="8" height="8" viewBox="0 0 8 8" aria-hidden="true"><circle cx="4" cy="4" r="4" fill="#333" /><path d="M2 2 L6 6 M6 2 L2 6" stroke="#bbb" /></svg></button>
            <button aria-label="控制盘" className="mt-2"><svg width="20" height="21" viewBox="0 0 20 21" aria-hidden="true"><rect width="20" height="21" rx="8" fill="#8e9093" /><circle cx="10" cy="10" r="6" fill="#a3a5a8" stroke="#4a4a4a" strokeWidth="1.500" /><circle cx="10" cy="10" r="3.500" fill="#999" /></svg></button>
            <i className="mt-4 h-px w-[26px] bg-[#333]" />
            <button aria-label="区域放大" className="mt-2"><svg width="16" height="17" viewBox="0 0 16 17" fill="none" aria-hidden="true"><path d="M12 6 V1 H1 V12 H6" stroke="#777" /><circle cx="10" cy="11" r="3" fill="#8d9590" /><path d="M12 13 L15 16" stroke="#777" /></svg></button>
            <button aria-label="自定义导航栏" className="mt-auto mr-0.5 mb-0.5 self-end"><svg width="8" height="8" viewBox="0 0 8 8" aria-hidden="true"><circle cx="4" cy="4" r="4" fill="#333" /><path d="M2 3 H6 M3 5 H5" stroke="#bbb" /></svg></button>
          </div>
        </div>
        <div className="flex w-[17px] flex-col items-center justify-between bg-[#f0f0f0] pt-1.5 pb-1">
          <Chevron />
          <i className="h-[17px] w-[15px] bg-[#cdcdcd]" />
          <Chevron r={180} />
        </div>
      </div>
      <div className="flex h-[18px] shrink-0 items-center pr-0.5 pb-0.5 pl-[21px]">
        <button className="w-[50px] text-left font-['Liberation_Mono',monospace] text-[11px] whitespace-nowrap text-black">1 : 100</button>
        <div className="ml-2 flex gap-[5px]">
          {VIEW_ICONS.map((icon, i) => (
            <button key={i} aria-label={"视图控制 " + (i + 1)}>
              <svg width="16" height="16" viewBox="0 0 16 16" fill="none" stroke={INK} strokeWidth="1.200" aria-hidden="true">{icon}</svg>
            </button>
          ))}
          <button aria-label="折叠" className="flex w-4 items-center pl-0.5"><Chevron r={-90} /></button>
        </div>
        <div className="flex flex-1 items-center justify-end">
          <i className="h-4 w-[17px] bg-[#cdcdcd]" />
          <span className="ml-[484px]"><Chevron r={90} /></span>
          <svg width="9" height="9" viewBox="0 0 9 9" fill="#aaa" className="mt-1 ml-2.5" aria-hidden="true"><path d="M6 0h2v2h-2z M3 3h2v2h-2z M6 3h2v2h-2z M0 6h2v2h-2z M3 6h2v2h-2z M6 6h2v2h-2z" /></svg>
        </div>
      </div>
    </section>
  );
}

type Node = { t: string; d: number; k?: "+" | "-" | "leaf"; icon?: "legend" | "table" | "sheet" | "family"; on?: boolean; last?: boolean };
const LEAVES = [
  "CW 102-50-100p", "CW 102-50-140p", "CW 102-50-215p", "CW 102-85-100p", "CW 102-85-140p", "CW 102-85-215p",
  "内部 - 79mm 隔断(1", "内部 - 135mm 隔断(2", "内部 - 138mm 隔断(1", "内部 - 砌块墙 100", "内部 - 砌块墙 140", "内部 - 砌块墙 190",
  "基础 - 300mm 混凝土", "基础 - 900mm 基脚", "外部 - 带砌块与金属立", "外部 - 带砖与金属立筋", "外部 - 带粉刷砖与砌块",
  "常规 - 90mm 砖", "常规 - 140mm 砌体", "常规 - 200mm", "常规 - 200mm - 实心", "常规 - 225mm 砌体", "常规 - 300mm", "挡土墙 - 300mm 混凝",
];
const TREE: Node[] = [
  ...["面积平面 (人防分区面积)", "面积平面 (净面积)", "面积平面 (总建筑面积)", "面积平面 (防火分区面积)"].map((t) => ({ t, d: 1, k: "+" as const })),
  { t: "图例", d: 0, k: "leaf", icon: "legend" },
  { t: "明细表/数量", d: 0, k: "+", icon: "table" },
  { t: "图纸 (全部)", d: 0, k: "leaf", icon: "sheet" },
  { t: "族", d: 0, k: "-", icon: "family" },
  ...["分割轮廓", "场地", "坡道", "填充图案"].map((t) => ({ t, d: 1, k: "+" as const })),
  { t: "墙", d: 1, k: "-" },
  { t: "叠层墙", d: 2, k: "+" },
  { t: "基本墙", d: 2, k: "-" },
  ...LEAVES.map((t, i) => ({ t, d: 3, k: "leaf" as const, on: i === 2, last: i === LEAVES.length - 1 })),
  { t: "幕墙", d: 2, k: "+", last: true },
  { t: "天花板", d: 1, k: "-" },
];

const TREE_ICONS: Record<string, ReactNode> = {
  legend: <><path d="M0 1 H15 V15 H0Z" fill="#fff" /><path d="M0 2 H15" strokeWidth="3" /><path d="M2 6 H5 V9 H2Z M2 11 H5 V13 H2Z" fill={INK} /><path d="M7 7 H13 M7 10 H13 M7 13 H13" /></>,
  table: <><path d="M1 2 H15 V14 H1Z M1 8 H15 M1 11 H15 M5 4 V14" fill="#fff" /><path d="M1 3 H15" strokeWidth="3" /></>,
  sheet: <path d="M1 3 H11 L15 6 V14 H1Z M3 6 H9 M3 6 V12 H6 V9 H9 V12 H12 V7" fill="#fff" />,
  family: <><path d="M1 1 H7 V8 H1Z M9 1 H14 V13 H2 V11 H9Z" fill="#fff" /></>,
};

function TreeRow({ n }: { n: Node }) {
  const w = n.icon ? 21 : 27;
  const dash = { stroke: "#999", strokeDasharray: "1 1" };
  return (
    <li className="flex h-5 items-center whitespace-nowrap">
      {Array.from({ length: n.d }, (_, i) => (
        <i key={i} className="ml-[9px] h-5 w-[11px] shrink-0 border-l border-dotted border-[#999]" />
      ))}
      <svg width={w} height="20" viewBox={`0 0 ${w} 20`} fill="none" className="shrink-0" aria-hidden="true">
        <path d={n.last ? "M9.500 0 V10" : "M9.500 0 V20"} {...dash} />
        <path d={`M10 10.500 H${n.icon ? 20 : 25}`} {...dash} />
        {n.k !== "leaf" && (
          <>
            <rect x="5.500" y="6.500" width="8" height="8" fill="#f4f4f4" stroke="#8a8a8a" />
            <path d={n.k === "+" ? "M7 10.500 H12 M9.500 8 V13" : "M7 10.500 H12"} stroke="#2a4a8a" />
          </>
        )}
      </svg>
      {n.icon && <svg width="16" height="16" viewBox="0 0 16 16" fill="none" stroke={INK} strokeWidth="1.100" className="mr-1.5 shrink-0" aria-hidden="true">{TREE_ICONS[n.icon]}</svg>}
      <span className={n.on ? "-ml-0.5 bg-[#0078d7] px-0.5 leading-[18px] text-white outline outline-dotted outline-[#e08a30]" : ""}>{n.t}</span>
    </li>
  );
}

function Browser() {
  return (
    <aside className="ml-[5px] flex w-[220px] shrink-0 flex-col bg-[#f0f0f0]">
      <div className="flex h-[18px] items-center justify-between bg-[#bfcddb] pr-1 pl-1 text-[13px] text-black">
        项目浏览器 - 项目1.rvt
        <button aria-label="关闭项目浏览器"><CloseX /></button>
      </div>
      <div className="mt-[3px] flex min-h-0 flex-1 flex-col border-t border-l border-[#777]">
        <div className="flex min-h-0 flex-1">
          <ul className="min-w-0 flex-1 overflow-hidden bg-white text-black">
            {TREE.map((n) => (
              <TreeRow key={n.t} n={n} />
            ))}
          </ul>
          <div className="flex w-4 flex-col items-center bg-[#f0f0f0] pt-1 pb-1">
            <Chevron />
            <i className="mt-14 h-[425px] w-[15px] bg-[#cdcdcd]" />
            <span className="mt-auto"><Chevron r={180} /></span>
          </div>
        </div>
        <div className="flex h-4 items-center gap-1 pr-5 pl-1">
          <Chevron r={-90} />
          <i className="h-4 w-[118px] bg-[#cdcdcd]" />
          <span className="ml-auto"><Chevron r={90} /></span>
        </div>
      </div>
    </aside>
  );
}

function Combo({ label, value }: { label: string; value?: string }) {
  return (
    <span className="relative flex w-[204px]">
      <select aria-label={label} className="h-[19px] w-full appearance-none bg-white pl-0.5 leading-4 text-[#777]"><option>{value}</option></select>
      <span className="absolute top-1.5 right-1"><Chevron r={180} c="#aaa" /></span>
    </span>
  );
}

function StatusBar() {
  const arrow = <path d="M9 6 V15 L11 13 L13 17 L14 16 L13 12 H16Z" fill="#fff" strokeWidth="0.900" />;
  return (
    <footer className="flex h-[25px] shrink-0 items-center border-t border-[#8c8c8c] bg-[#d4d4d4] text-black">
      <span className="w-[950px] pl-0.5">就绪</span>
      <button aria-label="工作集" className="mr-2">{g16(<path d="M1 9 L3 7 H6 V16 H2Z M6 7 L8 3 L13 4 L15 8 V16 H10 V9 M8 9 V16" stroke="#999" fill="#b5b5b5" />)}</button>
      <Combo label="活动工作集" />
      <button aria-label="编辑请求" className="mr-1.5 ml-2">{g16(<path d="M5 2 H14 L10 8 V11 L5 16 H1 L6 8Z" stroke="#999" fill="#c5c5c5" />)}</button>
      <span className="w-8">:0</span>
      <button aria-label="设计选项" className="mr-2.5">{g16(<><path d="M1 2 H15 V16 H1Z" fill="#fff" /><path d="M1 3 H15" strokeWidth="3" /><path d="M3 7 H6 M3 10 H6 M3 13 H6 M8 7 H13 M8 10 H13 M8 13 H13" /></>)}</button>
      <button aria-label="添加到集" className="mr-2">{g16(<path d="M2 3 H15 V16 H9 L4 12 H1 V9 L8 4" stroke="#999" fill="#aaa" />)}</button>
      <Combo label="设计选项" value="主模型" />
      <div className="mr-[127px] ml-auto flex gap-2.5">
        <button aria-label="选择链接">{g16(<><circle cx="4" cy="5" r="3" stroke="#d19a00" strokeWidth="2" /><circle cx="11" cy="5" r="3" stroke="#d19a00" strokeWidth="2" />{arrow}</>)}</button>
        <button aria-label="选择基线图元">{g16(<><path d="M0 11 L8 5 V11Z M0 14 H8" stroke={BLUE} fill="#bfe0f7" /><path d="M9 1 L15 7 M15 1 L9 7" stroke="#c01818" strokeWidth="2" />{arrow}</>)}</button>
        <button aria-label="选择锁定图元">{g16(<><path d="M2 2 H11 V4 H9 V8 H12 V11 H1 V8 H4 V4 H2Z M6 11 V16" stroke="#c05a1a" fill="#f7a35c" />{arrow}</>)}</button>
        <button aria-label="按面选择">{g16(<><path d="M1 6 L9 2 V12 L1 16Z" stroke={BLUE} fill="#8cc4ea" />{arrow}</>)}</button>
        <button aria-label="选择时拖拽">{g16(<path d="M7 1 V13 M1 7 H13 M5 3 L7 1 L9 3 M5 11 L7 13 L9 11 M3 5 L1 7 L3 9 M11 5 L13 7 L11 9" stroke="#222" />, 14)}</button>
      </div>
    </footer>
  );
}

function Callout({ x, y, zh, en }: { x: number; y: number; zh: string; en: string }) {
  return (
    <g textAnchor="middle" fill="#fff" stroke="#f23b3b" strokeWidth="6" paintOrder="stroke" strokeLinejoin="round">
      <text x={x} y={y} className="font-['Noto_Sans_CJK_SC',sans-serif] text-[34px] font-normal">{zh}</text>
      <text x={x} y={y + 38} className="font-['Liberation_Serif',serif] text-[35px] font-bold">{en}</text>
    </g>
  );
}

function Annotations() {
  return (
    <svg className="pointer-events-none absolute top-0 left-0 h-full w-full">
      <defs>
        <marker id="tip" viewBox="0 0 30 20" refX="28" refY="10" markerWidth="30" markerHeight="20" markerUnits="userSpaceOnUse" orient="auto">
          <path d="M30 10 L5 1 L11 10 L5 19Z" fill="#f23b3b" />
        </marker>
      </defs>
      <g fill="none" stroke="#f23b3b" strokeWidth="4">
        <rect x="752" y="529" width="287" height="192" rx="2" />
        <g strokeWidth="5">
          <rect x="1711" y="425" width="70" height="24" rx="3" />
          <rect x="1734" y="468" width="81" height="23" rx="3" />
          <rect x="1765" y="524" width="130" height="27" rx="3" />
        </g>
        <path d="M1094 362 L995 498" markerEnd="url(#tip)" />
        <path d="M1600 362 L1741 417" markerEnd="url(#tip)" />
        <path d="M1592 513 L1725 486" markerEnd="url(#tip)" />
        <path d="M1600 699 L1760 553" markerEnd="url(#tip)" />
      </g>
      <Callout x={1102} y={311} zh="族实例" en="FamilyInstance" />
      <Callout x={1581} y={311} zh="类别" en="Category" />
      <Callout x={1538} y={493} zh="族" en="Family" />
      <Callout x={1539} y={693} zh="族类型" en="FamilySymbol" />
    </svg>
  );
}

function InputMethodBar() {
  return (
    <div className="absolute right-0 bottom-0.5 flex h-[35px] w-[131px] items-center overflow-hidden border-2 border-r-0 border-black bg-white pl-2.5 text-[24px] leading-none text-black">
      中
      <svg width="16" height="30" viewBox="0 0 16 30" fill="none" stroke="#000" strokeWidth="1.500" className="mx-1" aria-hidden="true"><path d="M0 29 L12 8" stroke="#999" /><path d="M13 8 L11 17" strokeWidth="2" /><circle cx="11" cy="22" r="2.500" /></svg>
      <span className="ml-1">简</span>
      <svg width="36" height="30" viewBox="0 0 36 30" className="ml-1.5 shrink-0" aria-hidden="true">
        <path d="M2 10 L9 5 C11 8 14 8 16 5 L23 10 L20 15 L18 14 V23 H7 V14 L5 15Z" fill="#000" />
        <path d="M18 16 L36 26 M16 23 L24 30" stroke="#777" strokeWidth="1.500" />
      </svg>
    </div>
  );
}

export default function App() {
  return (
    <div className="relative flex h-screen flex-col overflow-hidden bg-[#f0f0f0] font-['Open_Sans','Noto_Sans_CJK_SC',sans-serif] text-[12px] text-[#333]">
      <Gradients />
      <TitleBar />
      <Ribbon />
      <main className="flex min-h-0 flex-1">
        <Properties />
        <Viewport />
        <Browser />
      </main>
      <StatusBar />
      <div className="h-0.5 shrink-0 bg-[#10263a]" />
      <InputMethodBar />
      <Annotations />
    </div>
  );
}
